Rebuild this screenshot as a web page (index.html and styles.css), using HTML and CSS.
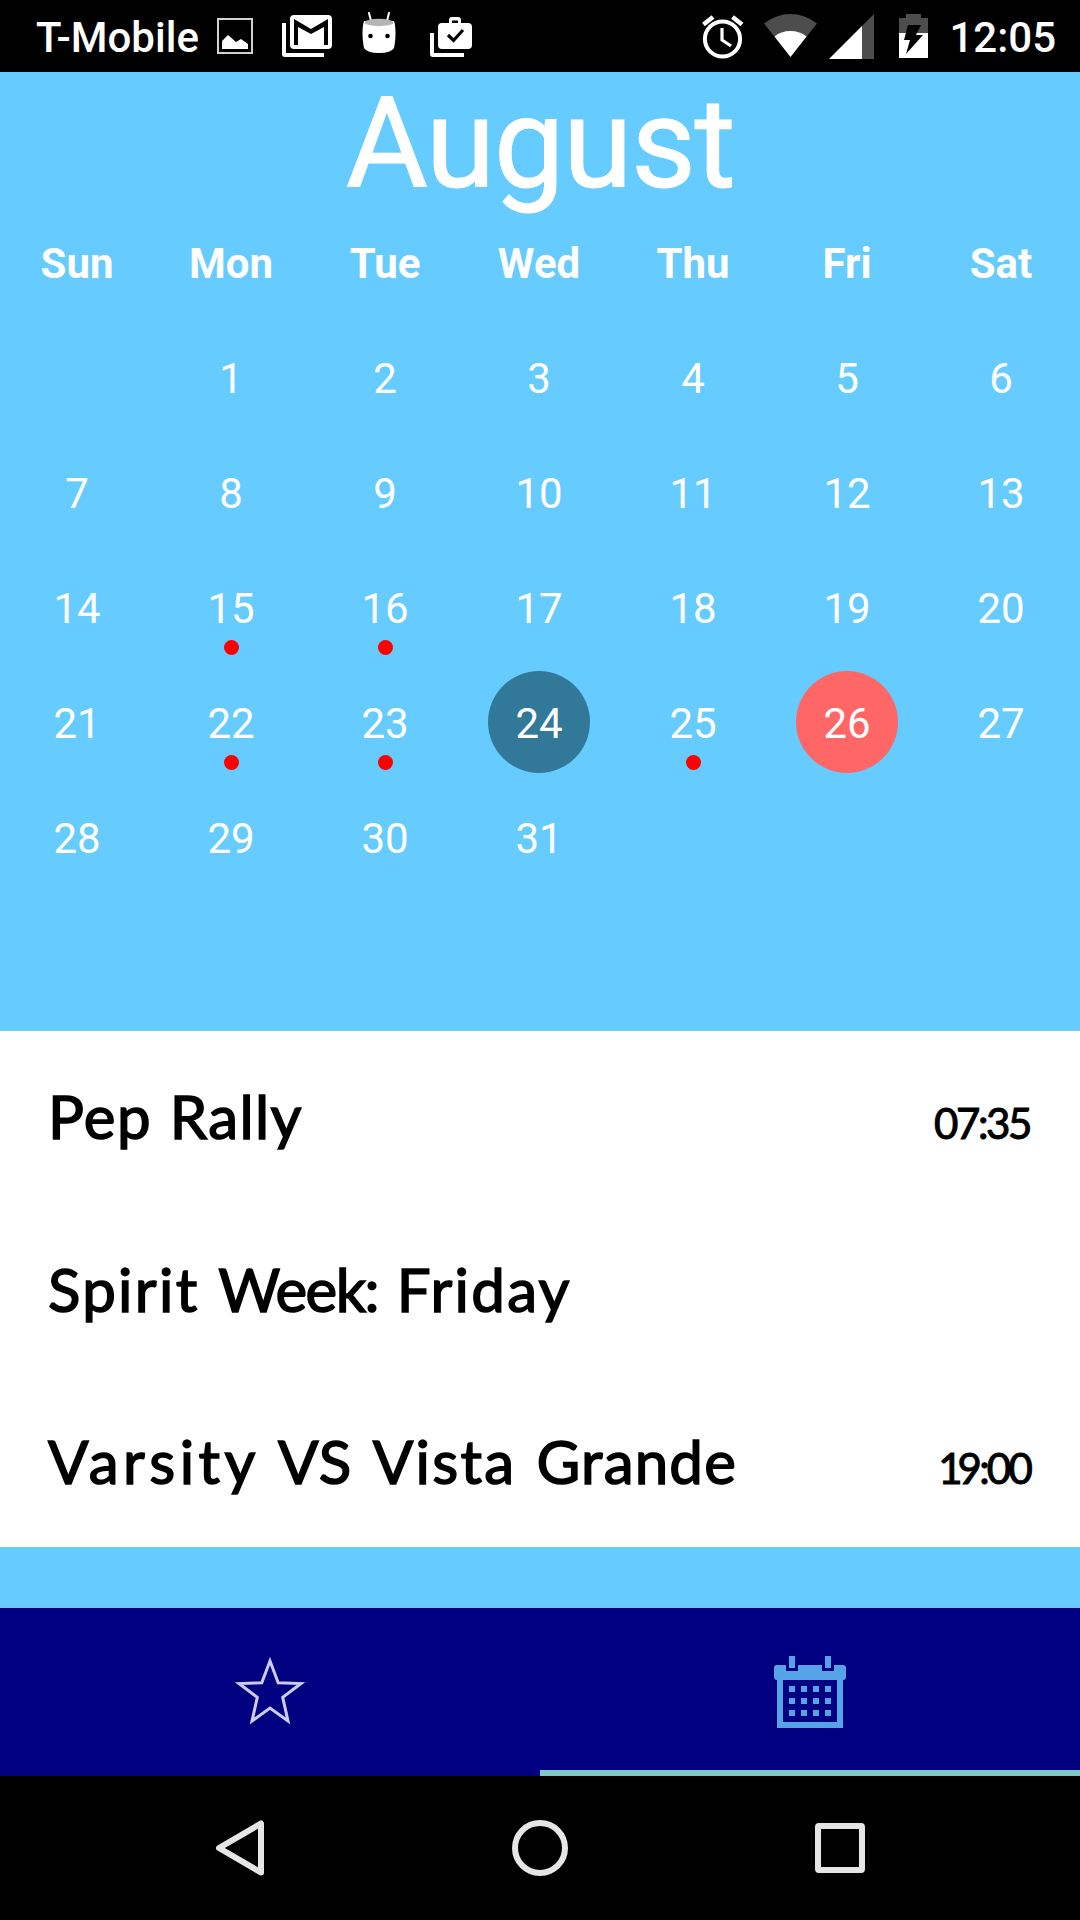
FILE: index.html
```html
<!DOCTYPE html>
<html lang="en">
<head>
<meta charset="utf-8">
<title>August</title>
<link rel="stylesheet" href="styles.css">
</head>
<body>
<header class="status">
  <div class="status-left">
    <span class="carrier">T-Mobile</span>
    <svg class="picture" width="36" height="36" viewBox="0 0 36 36"><path d="M1 1h34v34H1z" fill="none" stroke="#d2d2d2" stroke-width="2"/><path d="M5 31V23l6-6 8 7 5-3 7 5v5z" fill="#fff"/></svg>
    <svg class="mail" width="50" height="42" viewBox="0 0 50 42" fill="#fff"><path d="M0 8h4v30h38v4H3q-3 0-3-3z"/><path fill-rule="evenodd" d="M12 0h34q4 0 4 4v26q0 4-4 4H12q-4 0-4-4V4q0-4 4-4zM12 4v26h4V12l13 7 13-7v18h4V4L29 14z"/></svg>
    <svg class="droid" width="34" height="42" viewBox="0 0 34 42"><path d="M7 1l2 8M27 1l-2 8" stroke="#fff" stroke-width="2" stroke-linecap="round"/><path d="M2 9C0 15 0 26 2 36q3 5 15 5t15-5c2-10 2-21 0-27z" fill="#fff"/><ellipse cx="17" cy="10.500" rx="14.500" ry="3.700" fill="#b5b5b5"/><circle cx="8.500" cy="24" r="2.300"/><circle cx="25.500" cy="24" r="2.300"/></svg>
    <svg class="case" width="42" height="40" viewBox="0 0 42 40"><path d="M0 16h4v20h30v4H3q-3 0-3-3z" fill="#fff"/><path fill-rule="evenodd" fill="#fff" d="M12 6h7V3q0-3 3-3h6q3 0 3 3v3h7q4 0 4 4v18q0 4-4 4H12q-4 0-4-4V10q0-4 4-4zm10 0h6V3.500h-6z"/><path d="M18 18l5.500 5.500L33 13" fill="none" stroke="#000" stroke-width="3.200"/></svg>
  </div>
  <div class="status-right">
    <svg class="alarm" width="42" height="44" viewBox="0 0 42 44" fill="none" stroke="#fff"><circle cx="20.500" cy="24" r="17.600" stroke-width="4"/><path d="M20 13v12l9 6" stroke-width="3.200"/><path d="M1.500 9.500L11 2M40 9.500L30.500 2" stroke-width="4.500"/></svg>
    <svg class="wifi" width="54" height="44" viewBox="0 0 54 44"><path d="M0 9.500Q12 0 26.500 0T53 9.500L26.500 43z" fill="#4d4d4d"/><path d="M10.500 22.500Q17 17 26.500 17t16 5.500L26.500 43z" fill="#fff"/></svg>
    <svg class="signal" width="45" height="45" viewBox="0 0 45 45"><path d="M0 45L45 0v45z" fill="#4d4d4d"/><path d="M0 45L33 12v33z" fill="#fff"/></svg>
    <svg class="battery" width="29" height="44" viewBox="0 0 29 44"><path d="M0 4h7V0h15v4h7v16H0z" fill="#4d4d4d"/><path d="M0 19h29v25H0z" fill="#fff"/><path d="M9 11h13l-5 10h7L7 40l4-14H5z" fill="#000"/></svg>
    <span class="clock">12:05</span>
  </div>
</header>

<main class="calendar">
  <h1 class="month">August</h1>
  <div class="grid">
    <b>Sun</b><b>Mon</b><b>Tue</b><b>Wed</b><b>Thu</b><b>Fri</b><b>Sat</b>
    <span></span><span>1</span><span>2</span><span>3</span><span>4</span><span>5</span><span>6</span>
    <span>7</span><span>8</span><span>9</span><span>10</span><span>11</span><span>12</span><span>13</span>
    <span>14</span><span class="event">15</span><span class="event">16</span><span>17</span><span>18</span><span>19</span><span>20</span>
    <span>21</span><span class="event">22</span><span class="event">23</span><span><i class="disc today">24</i></span><span class="event">25</span><span><i class="disc selected">26</i></span><span>27</span>
    <span>28</span><span>29</span><span>30</span><span>31</span>
  </div>
</main>

<section class="events">
  <div class="row"><span class="title pep">Pep Rally</span><span class="time">07:35</span></div>
  <div class="row"><span class="title spirit"><span class="loose">Spirit</span> <span class="tight">Week:</span> <span class="loose">Friday</span></span></div>
  <div class="row"><span class="title varsity"><span class="wide">Varsity</span> VS <span class="loose">Vista</span> Grande</span><span class="time late"><span class="one">1</span>9:00</span></div>
</section>

<nav class="tabs">
  <div class="tab"><svg width="72" height="72" viewBox="0 0 72 72"><path d="M36 5l8.200 21.800 22.800.7-18.300 13.800 5.300 23.700L36 52 18 65l5.300-23.700L5 27.500l22.800-.7z" fill="none" stroke="#ccccf5" stroke-width="3"/></svg></div>
  <div class="tab active"><svg width="72" height="72" viewBox="0 0 72 72" fill="#55a4e8"><path d="M15 0h6v12h-6zM51 0h6v12h-6zM3 9h9v6h12V9h24v6h12V9h9q3 0 3 3v9q0 3-3 3v48H3V24q-3 0-3-3v-9q0-3 3-3zm6 15v42h54V24z" fill-rule="evenodd"/><path d="M15 30h6v6h-6zm12 0h6v6h-6zm12 0h6v6h-6zm12 0h6v6h-6zM15 42h6v6h-6zm12 0h6v6h-6zm12 0h6v6h-6zm12 0h6v6h-6zM15 54h6v6h-6zm12 0h6v6h-6zm12 0h6v6h-6zm12 0h6v6h-6z"/></svg></div>
</nav>

<footer class="navbar">
  <svg width="56" height="56" viewBox="0 0 56 56"><path d="M49 3.500v49L7 28z"/></svg>
  <svg width="56" height="56" viewBox="0 0 56 56"><circle cx="28" cy="28" r="25"/></svg>
  <svg width="56" height="56" viewBox="0 0 56 56"><rect x="6" y="6" width="44" height="44" rx="1"/></svg>
</footer>
</body>
</html>
```

FILE: styles.css
```css
* { box-sizing: border-box; }
body {
  margin: 0;
  width: 1080px;
  height: 1920px;
  overflow: hidden;
  display: flex;
  flex-direction: column;
  background: #66cbff;
  font-family: Roboto, sans-serif;
}
svg { display: block; flex: none; }

.status {
  height: 72px;
  flex: none;
  display: flex;
  justify-content: space-between;
  padding: 0 24px 0 36px;
  background: #000;
  color: #fff;
  font-size: 42px;
  font-weight: 500;
  line-height: 76px;
}
.status-left, .status-right { display: flex; align-items: flex-start; }
.carrier { width: 181px; }
.picture { margin-top: 18px; }
.mail { margin: 15px 0 0 29px; }
.droid { margin: 12px 0 0 30px; }
.case { margin: 17px 0 0 34px; }
.alarm { margin: 15px 0 0; }
.wifi { margin: 14px 0 0 20px; }
.signal { margin: 14px 0 0 11px; }
.battery { margin: 14px 0 0 25px; }
.clock { margin-left: 21px; }

.calendar { height: 959px; flex: none; color: #fff; }
.month {
  margin: 0;
  height: 133px;
  font: 400 126px/145px Roboto, sans-serif;
  letter-spacing: -1.500px;
  text-align: center;
  -webkit-text-stroke: 1px #fff;
}
.grid {
  width: 1078px;
  display: grid;
  grid-template-columns: repeat(7, 154px);
  grid-auto-rows: 115px;
  font-size: 42px;
}
.grid > * {
  position: relative;
  display: flex;
  align-items: center;
  justify-content: center;
  padding: 2px 0 0 0;
}
.disc {
  width: 102px;
  height: 102px;
  margin: -4px 0 0 0;
  padding: 4px 0 0 0;
  display: flex;
  align-items: center;
  justify-content: center;
  border-radius: 50%;
  font-style: normal;
}
.today { background: #327899; }
.selected { background: #ff6666; }
.event::after {
  content: "";
  position: absolute;
  left: 69.500px;
  top: 89.500px;
  width: 15px;
  height: 15px;
  border-radius: 50%;
  background: #f00;
}

.events {
  height: 516px;
  flex: none;
  background: #fff;
  color: #000;
  font-family: Lato, sans-serif;
}
.row {
  height: 172.500px;
  padding: 0 48px;
  display: flex;
  justify-content: space-between;
  align-items: baseline;
  line-height: 170px;
  white-space: nowrap;
}
.title { font-size: 60px; -webkit-text-stroke: 1.500px #000; }
.pep { letter-spacing: 1.400px; word-spacing: 1px; }
.spirit { word-spacing: 3.500px; }
.varsity { letter-spacing: 1.200px; word-spacing: 3.500px; }
.wide { letter-spacing: 4.500px; }
.loose { letter-spacing: 2.300px; }
.tight { letter-spacing: -1.600px; }
.time {
  margin-right: 2px;
  font-size: 42px;
  letter-spacing: -2.400px;
  -webkit-text-stroke: 1px #000;
}
.late { letter-spacing: -2.800px; }
.one { letter-spacing: -5px; }

.tabs {
  height: 168px;
  margin-top: 61px;
  flex: none;
  display: flex;
  background: #000080;
}
.tab {
  flex: 1;
  display: flex;
  justify-content: center;
  align-items: center;
  border-bottom: 6px solid transparent;
  padding-top: 6px;
}
.active { border-color: #7fc8c8; }

.navbar {
  height: 144px;
  flex: none;
  display: flex;
  align-items: center;
  justify-content: center;
  gap: 244px;
  background: #000;
}
.navbar svg { fill: none; stroke: #e6e6e6; stroke-width: 6; stroke-linejoin: round; }
```
